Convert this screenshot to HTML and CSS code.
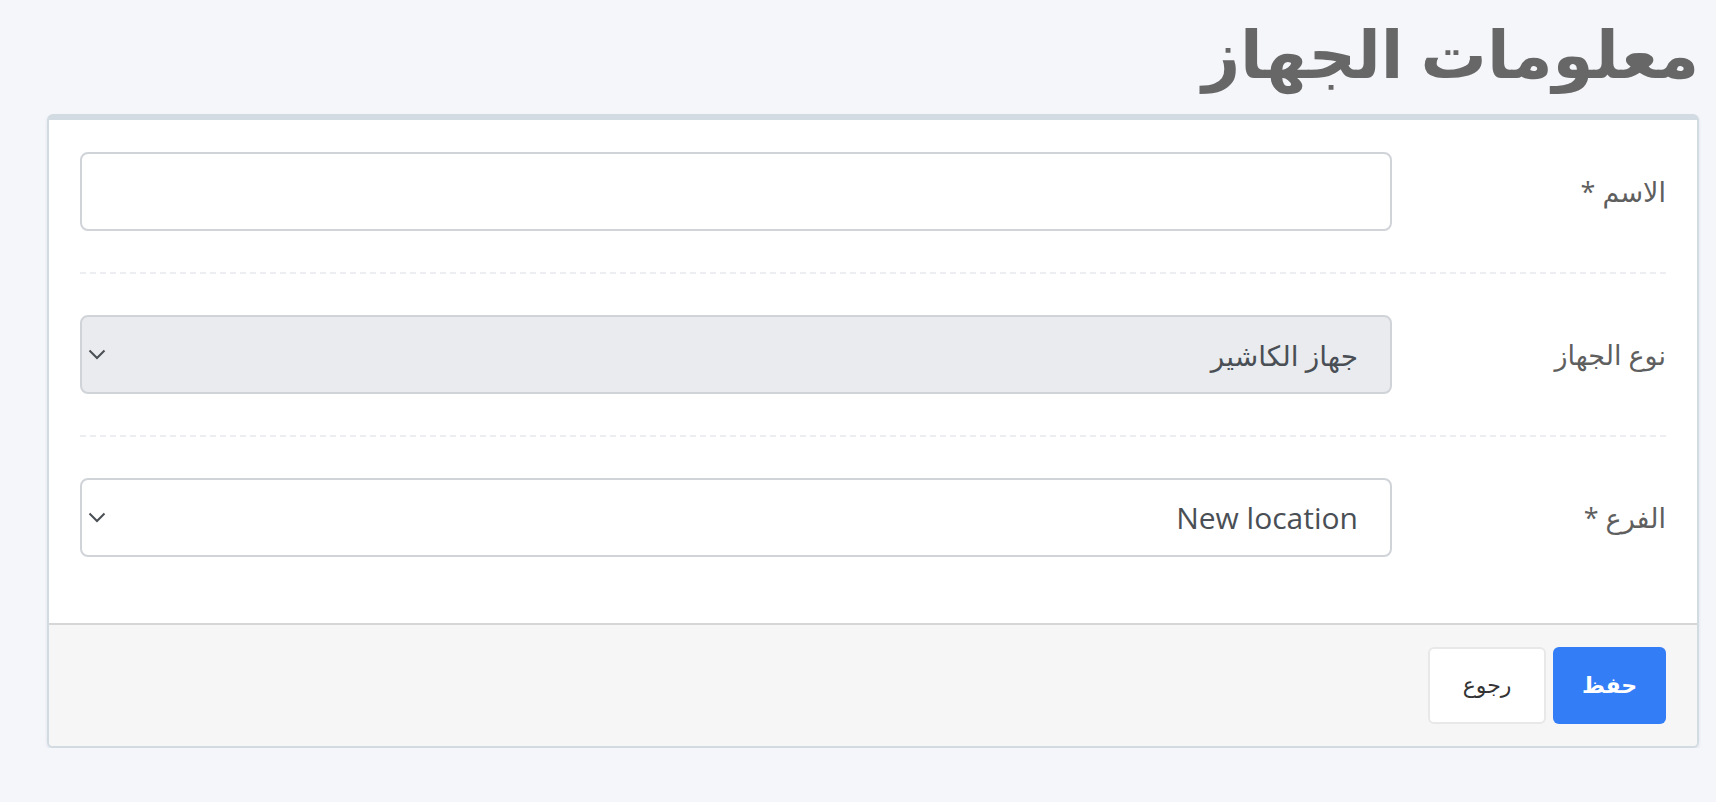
FILE: index.html
```html
<!DOCTYPE html>
<html lang="ar" dir="rtl">
<head>
<meta charset="utf-8">
<title>معلومات الجهاز</title>
<link rel="stylesheet" href="styles.css">
</head>
<body>
<div class="page">
  <h1 class="title">معلومات الجهاز</h1>
  <div class="card">
    <div class="card-body">
      <div class="row">
        <label class="label">الاسم *</label>
        <div class="control input"></div>
      </div>
      <hr class="sep">
      <div class="row">
        <label class="label">نوع الجهاز</label>
        <div class="control select disabled">
          <span class="value">جهاز الكاشير</span>
          <svg class="chev" width="18" height="11" viewBox="0 0 18 11"><path d="M1.5 1.5 L9 9 L16.5 1.5" fill="none" stroke="#4a4f55" stroke-width="2"/></svg>
        </div>
      </div>
      <hr class="sep">
      <div class="row">
        <label class="label">الفرع *</label>
        <div class="control select">
          <span class="value latin">New location</span>
          <svg class="chev" width="18" height="11" viewBox="0 0 18 11"><path d="M1.5 1.5 L9 9 L16.5 1.5" fill="none" stroke="#4a4f55" stroke-width="2"/></svg>
        </div>
      </div>
    </div>
    <div class="card-footer">
      <button class="btn btn-primary">حفظ</button>
      <button class="btn btn-default">رجوع</button>
    </div>
  </div>
</div>
</body>
</html>
```

FILE: styles.css
```css
* { box-sizing: border-box; }
html, body { margin: 0; padding: 0; }
body {
  background: #f5f6fa;
  font-family: "Open Sans", "DejaVu Sans", sans-serif;
  color: #666;
}
.page {
  padding: 0 17px 0 47px;
}
.title {
  margin: 0;
  height: 114px;
  padding-top: 4px;
  font-size: 66px;
  line-height: 96px;
  font-weight: bold;
  color: #676767;
  text-align: right;
}
.card {
  background: #fff;
  border: 2px solid #d3dbe2;
  border-top-width: 6px;
  border-radius: 6px;
  box-shadow: 0 2px 3px rgba(180, 195, 210, 0.4);
  overflow: hidden;
}
.card-body {
  padding: 32px 31px 66px 31px;
}
.row {
  display: grid;
  grid-template-columns: 274px 1fr;
  align-items: center;
}
.label {
  font-size: 27px;
  color: #5f5f5f;
  text-align: right;
}
.control {
  height: 79px;
  border: 2px solid #d0d4d9;
  border-radius: 8px;
  background: #fff;
}
.select {
  display: flex;
  align-items: center;
  justify-content: space-between;
  padding: 0 32px 0 6px;
}
.select.disabled {
  background: #e9ebee;
}
.value {
  font-size: 28px;
  color: #4a4f55;
}
.value.latin {
  font-size: 30px;
}
.chev { display: block; }
.sep {
  margin: 41px 0;
  border: 0;
  border-top: 2px dashed #eceef1;
}
.card-footer {
  background: #f6f6f6;
  border-top: 2px solid #d6d6d6;
  padding: 22px 31px 22px;
  display: flex;
  gap: 7px;
}
.btn {
  font-family: "DejaVu Sans", sans-serif;
  font-size: 22px;
  height: 77px;
  border-radius: 6px;
  cursor: pointer;
}
.btn-primary {
  width: 113px;
  background: #337ef6;
  border: 0;
  color: #fff;
  font-weight: 600;
}
.btn-default {
  width: 118px;
  background: #fff;
  border: 2px solid #e8e8e8;
  color: #333;
}
```
